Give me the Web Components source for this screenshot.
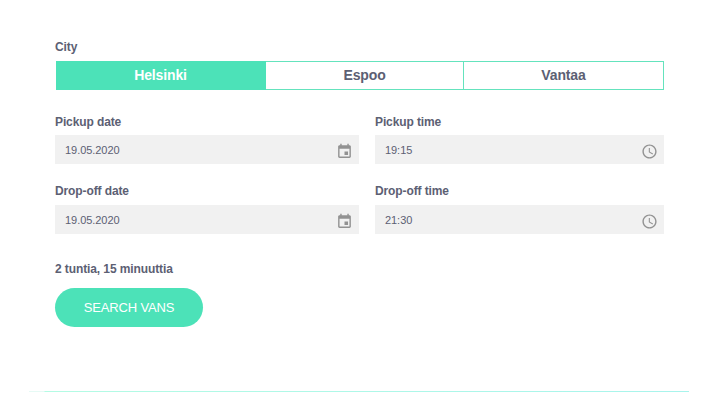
<!DOCTYPE html>
<html lang="en">
<head>
<meta charset="utf-8">
<title>Search vans</title>
<style>
body { margin: 0; background: #fff; font-family: "Liberation Sans", Arial, sans-serif; color: #5c6073; }
</style>
</head>
<body>
<van-search></van-search>
<script>
const define = (name, html) => customElements.define(name, class extends HTMLElement {
  constructor() {
    super();
    const t = document.createElement('template');
    t.innerHTML = html;
    this.attachShadow({ mode: 'open' }).append(t.content.cloneNode(true));
  }
});

define('field-label', `
<style>
:host { display: block; height: 15px; font-size: 12px; font-weight: 700; line-height: 15px; white-space: nowrap; }
span { letter-spacing: var(--label-spacing, -0.11px); }
</style><span><slot></slot></span>`);

define('city-tab', `
<style>
:host { box-sizing: border-box; display: flex; align-items: center; justify-content: center; height: 29px; padding-bottom: 1px;
  border: solid #64e3bd; border-width: 1px 1px 1px 0; font-size: 14px; font-weight: 700; line-height: 16px; letter-spacing: -0.13px; }
:host([selected]) { background: #4ce2b8; border-color: #4ce2b8; color: #fff; }
</style><slot></slot>`);

define('city-tabs', `
<style>
:host { display: grid; grid-template-columns: 210px 198px 200px; margin-left: 1px; }
</style><slot></slot>`);

define('calendar-icon', `
<style>:host, svg { display: block; width: 17px; height: 17px; }</style>
<svg viewBox="0 0 24 24" fill="#929292"><path d="M17 12h-5v5h5v-5zM16 1v2H8V1H6v2H5c-1.11 0-1.99.9-1.99 2L3 19c0 1.1.89 2 2 2h14c1.1 0 2-.9 2-2V5c0-1.1-.9-2-2-2h-1V1h-2zm3 18H5V8h14v11z"/></svg>`);

define('clock-icon', `
<style>:host, svg { display: block; width: 17px; height: 17px; }</style>
<svg viewBox="0 0 24 24" fill="#929292"><path d="M11.99 2C6.47 2 2 6.48 2 12s4.47 10 9.99 10C17.52 22 22 17.52 22 12S17.52 2 11.99 2zM12 20c-4.42 0-8-3.58-8-8s3.58-8 8-8 8 3.58 8 8-3.58 8-8 8zm.5-13H11v6l5.25 3.15.75-1.23-4.5-2.67z"/></svg>`);

define('form-field', `
<style>
:host { display: block; }
.box { box-sizing: border-box; display: flex; justify-content: space-between; height: 29px; margin-top: 5.5px;
  padding: 8px 6px 0 10px; background: #f1f1f1; font-size: 11px; line-height: 15px; letter-spacing: -0.05px; }
</style>
<field-label><slot name="label"></slot></field-label>
<div class="box"><slot></slot><slot name="icon"></slot></div>`);

define('pill-button', `
<style>
:host { display: block; }
button { display: block; width: 148px; height: 39px; padding: 0; border: 0; border-radius: 20px; background: #4ce2b8;
  color: #fff; font: 13px/39px "Liberation Sans", Arial, sans-serif; letter-spacing: -0.15px; }
</style><button><slot></slot></button>`);

define('fade-rule', `
<style>
:host { display: block; height: 1px; margin: 0 29px 0 29px;
  background: linear-gradient(90deg, #e6faf5 0 15px, #b4fbe4 16px, #a8f4ec 100%); }
</style>`);

define('van-search', `
<style>
:host { display: block; }
main { padding: 40px 54px 0 55px; }
city-tabs { margin-top: 6px; }
.fields { display: grid; grid-template-columns: 304.4px 289px; gap: 19.7px 15.6px; margin-top: 24.9px; }
.duration { margin-top: 28.4px; --label-spacing: -0.1px; }
pill-button { margin-top: 11px; }
fade-rule { margin-top: 64px; }
</style>
<main>
  <field-label>City</field-label>
  <city-tabs>
    <city-tab selected>Helsinki</city-tab><city-tab>Espoo</city-tab><city-tab>Vantaa</city-tab>
  </city-tabs>
  <div class="fields">
    <form-field><span slot="label">Pickup date</span>19.05.2020<calendar-icon slot="icon"></calendar-icon></form-field>
    <form-field><span slot="label">Pickup time</span>19:15<clock-icon slot="icon"></clock-icon></form-field>
    <form-field><span slot="label">Drop-off date</span>19.05.2020<calendar-icon slot="icon"></calendar-icon></form-field>
    <form-field><span slot="label">Drop-off time</span>21:30<clock-icon slot="icon"></clock-icon></form-field>
  </div>
  <field-label class="duration">2 tuntia, 15 minuuttia</field-label>
  <pill-button>SEARCH VANS</pill-button>
</main>
<fade-rule></fade-rule>`);
</script>
</body>
</html>
